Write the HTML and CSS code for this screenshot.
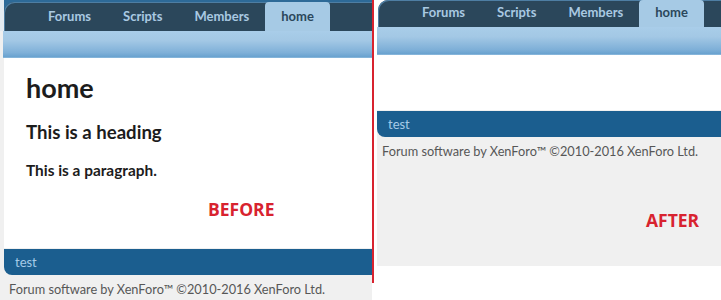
FILE: index.html
```html
<!DOCTYPE html>
<html lang="en">
<head>
    <meta charset="UTF-8">
    <meta name="viewport" content="width=device-width, initial-scale=1.0">
    <title>Before / After</title>
    <link rel="stylesheet" href="styles.css">
</head>
<body>
    <div class="compare">
        <section class="shot shot-before">
            <div class="nav-strip">
                <ul class="nav-tabs">
                    <li>Forums</li>
                    <li>Scripts</li>
                    <li>Members</li>
                    <li class="selected">home</li>
                </ul>
            </div>
            <div class="sub-bar"></div>
            <div class="content">
                <h1>home</h1>
                <h2>This is a heading</h2>
                <p class="para">This is a paragraph.</p>
                <div class="label label-before">BEFORE</div>
            </div>
            <div class="footer-bar">test</div>
            <p class="copyright">Forum software by XenForo™ ©2010-2016 XenForo Ltd.</p>
        </section>

        <div class="divider"></div>

        <section class="shot shot-after">
            <div class="page">
                <div class="nav-strip">
                    <ul class="nav-tabs">
                        <li>Forums</li>
                        <li>Scripts</li>
                        <li>Members</li>
                        <li class="selected">home</li>
                    </ul>
                </div>
                <div class="sub-bar"></div>
                <div class="content"></div>
                <div class="footer-bar">test</div>
                <p class="copyright">Forum software by XenForo™ ©2010-2016 XenForo Ltd.</p>
                <div class="label label-after">AFTER</div>
            </div>
        </section>
    </div>
</body>
</html>
```

FILE: styles.css
```css
body {
    margin: 0;
    background-color: #fff;
    font-family: 'Lato', 'Liberation Sans', sans-serif;
}

.compare {
    display: flex;
    height: 300px;
    overflow: hidden;
}

/* screenshots */
.shot {
    height: 300px;
    overflow: hidden;
}

.shot-before {
    width: 372px;
    flex: none;
    background-color: #f0f0f0;
}

.shot-after {
    flex: 1;
    padding-left: 3px;
}

.shot-after .page {
    height: 266px;
    background-color: #f0f0f0;
}

.divider {
    width: 2px;
    height: 283px;
    flex: none;
    background-color: #d8232f;
}

/* nav tabs */
.nav-strip {
    padding: 2px 0 0 4px;
    background: linear-gradient(90deg, #e4ebf1 0, #e4ebf1 4px, #2d6a98 4px);
}

.shot-after .nav-strip {
    padding: 0 0 0 1px;
    background: #fff;
}

.nav-tabs {
    display: flex;
    margin: 0;
    padding: 0 0 0 28px;
    list-style: none;
    height: 29px;
    background-color: #2b475b;
    border-radius: 10px 0 0 0;
    box-shadow: inset 1px 1px 0 #4e7ea3;
}

.shot-after .nav-tabs {
    height: 27px;
}

.nav-tabs li {
    padding: 0 16px;
    line-height: 29px;
    font-size: 13px;
    font-weight: bold;
    color: #a9c9e2;
}

.shot-after .nav-tabs li {
    line-height: 25px;
}

.nav-tabs li.selected {
    background-color: #a6cae5;
    color: #2b475b;
    border-radius: 4px 4px 0 0;
    padding: 0 16px;
}

.sub-bar {
    height: 27px;
    margin-left: 3px;
    background: linear-gradient(#a9cde9 0%, #a3c8e5 35%, #7fb0d8 80%, #69a2cf 96%, #9cc3e2 100%);
}

.shot-after .sub-bar {
    height: 28px;
    margin-left: 0;
}

/* content */
.content {
    height: 190px;
    margin-left: 4px;
    padding: 14px 0 0 22px;
    box-sizing: border-box;
    background-color: #fff;
    color: #1c1c1c;
}

.shot-after .content {
    height: 55px;
    margin: 0 0 1px 0;
}

.content h1 {
    margin: 0;
    font-size: 27px;
    font-weight: bold;
    line-height: 32px;
}

.content h2 {
    margin: 17px 0 0;
    font-size: 18.6px;
    font-weight: bold;
    line-height: 22px;
}

.para {
    margin: 18px 0 0;
    font-size: 15.4px;
    font-weight: bold;
    line-height: 19px;
}

.label {
    font-family: 'Open Sans', sans-serif;
    font-size: 17.5px;
    font-weight: bold;
    color: #d8232f;
    line-height: 22px;
}

.label-before {
    margin: 18px 0 0 182px;
}

.label-after {
    margin: 48px 0 0 269px;
}

/* footer */
.footer-bar {
    height: 26px;
    margin-left: 4px;
    padding-left: 11px;
    line-height: 26px;
    font-size: 13px;
    color: #a6cbe8;
    background-color: #1b5e8f;
    border-radius: 0 0 0 8px;
}

.shot-before .footer-bar {
    margin-top: 1px;
}

.shot-after .footer-bar {
    margin-left: 0;
}

.copyright {
    margin: 0;
    padding: 4px 0 0 9px;
    font-size: 12.75px;
    line-height: 20px;
    color: #575757;
}

.shot-after .copyright {
    padding: 4px 0 0 5px;
}
```
